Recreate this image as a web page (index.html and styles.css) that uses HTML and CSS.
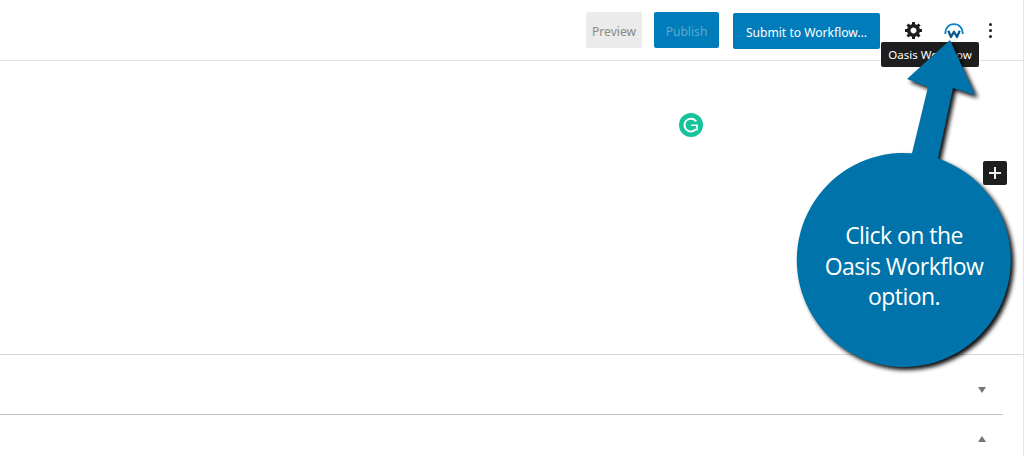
FILE: index.html
```html
<!DOCTYPE html>
<html lang="en">
<head>
<meta charset="utf-8">
<title>Oasis Workflow</title>
<link rel="stylesheet" href="styles.css">
</head>
<body>
<div class="page">
  <header class="topbar">
    <div class="btn btn-preview">Preview</div>
    <div class="btn btn-publish">Publish</div>
    <div class="btn btn-submit">Submit to Workflow...</div>
    <svg class="icon icon-gear" viewBox="0 0 20 20"><path d="M18 12h-2.180c-.17.7-.44 1.350-.81 1.930l1.540 1.540-2.100 2.100-1.540-1.540c-.58.36-1.230.63-1.910.79V19H8v-2.180c-.68-.16-1.330-.43-1.910-.79l-1.540 1.540-2.120-2.120 1.540-1.540c-.36-.58-.63-1.230-.79-1.910H1V9.030h2.170c.16-.7.44-1.350.8-1.940L2.430 5.550l2.100-2.100 1.540 1.540c.58-.37 1.240-.64 1.930-.81V2h3v2.180c.68.16 1.330.43 1.910.79l1.540-1.540 2.120 2.120-1.540 1.540c.36.59.64 1.240.8 1.940H18V12zm-8.500 1.500c1.660 0 3-1.340 3-3s-1.340-3-3-3-3 1.340-3 3 1.340 3 3 3z"/></svg>
    <svg class="icon icon-oasis" viewBox="0 0 20 16" fill="none"><path d="M1.400 11C.8 5 5 1.100 10 1.100s9.200 3.900 8.600 9.900" stroke="#0a84c8" stroke-width="1.900"/><path d="M4.300 7.800 7 14 10 8.800 13 14 15.700 7.800" stroke="#10598f" stroke-width="2.300" stroke-linejoin="round"/></svg>
    <div class="dots"><span></span><span></span><span></span></div>
  </header>
  <main class="editor">
    <div class="grammarly">
      <svg viewBox="0 0 24 24" fill="none" stroke="#fff"><path d="M17.200 8.500A6.400 6.400 0 1 0 16.800 16.200" stroke-width="1.900"/><path d="M12 12.300H18V17.500" stroke-width="1.600"/></svg>
    </div>
    <div class="plus"></div>
  </main>
  <section class="panel">
    <div class="panel-row"><span class="caret caret-down"></span></div>
    <div class="panel-row"><span class="caret caret-up"></span></div>
  </section>
</div>
<div class="tooltip">Oasis Workflow</div>
<div class="callout">
  <svg class="callout-shape" viewBox="790 36 240 350">
    <path d="M950 40 975 95 953 88 938 158.600A107 107 0 1 1 912 153.300L928 87 907 79Z"/>
  </svg>
  <p class="callout-text">Click on the<br>Oasis Workflow<br>option.</p>
</div>
</body>
</html>
```
FILE: styles.css
```css
* { box-sizing: border-box; }
html, body { margin: 0; height: 100%; overflow: hidden; background: #fff; }
body { font-family: "Noto Sans", "Open Sans", sans-serif; }
.page { width: 1024px; height: 456px; border-right: 1px solid #e2e4e7; display: flex; flex-direction: column; }
.topbar { height: 61px; flex: none; border-bottom: 1px solid #e2e4e7; display: flex; align-items: center; padding: 0 0 0 586px; }
.btn { height: 36px; padding-top: 2px; display: flex; align-items: center; justify-content: center; font-size: 12.100px; border-radius: 2px; flex: none; }
.btn-preview { width: 56px; background: #ebebeb; color: #8a8a85; }
.btn-publish { width: 65px; margin-left: 12px; background: #007cba; color: #5ea9d3; }
.btn-submit { width: 147px; margin-left: 14px; margin-top: 2px; background: #007cba; color: #fff; }
.icon { flex: none; display: block; }
.icon-gear { width: 20px; height: 20px; margin-left: 24px; fill: #1e1e1e; }
.icon-oasis { width: 20px; height: 16px; margin-left: 20px; margin-top: 1px; }
.dots { width: 4px; margin-left: 24px; display: flex; flex-direction: column; gap: 3px; align-items: center; }
.dots span { width: 3px; height: 3px; border-radius: 50%; background: #1e1e1e; }
.editor { position: relative; flex: none; height: 294px; border-bottom: 1px solid #d8d8d8; }
.grammarly { position: absolute; left: 679px; top: 52px; width: 24px; height: 24px; border-radius: 50%; background: #15c39a; }
.grammarly svg { display: block; width: 24px; height: 24px; }
.plus { position: absolute; left: 983px; top: 100px; width: 24px; height: 24px; border-radius: 2px; background: #1e1e1e; }
.plus::before, .plus::after { content: ""; position: absolute; background: #f0f0f0; }
.plus::before { left: 6px; top: 11px; width: 12px; height: 2px; }
.plus::after { left: 11px; top: 6px; width: 2px; height: 12px; }
.panel { flex: 1; width: 1003px; background: #fff; }
.panel-row { height: 60px; border-bottom: 1px solid #c4c4c4; position: relative; }
.panel-row:last-child { border-bottom: 0; }
.caret { position: absolute; left: 977.500px; width: 0; height: 0; border-left: 4.500px solid transparent; border-right: 4.500px solid transparent; }
.caret-down { top: 32px; border-top: 6px solid #72777c; }
.caret-up { top: 21px; border-bottom: 6px solid #72777c; }
.tooltip { position: absolute; left: 881px; top: 42px; width: 98px; height: 25px; border-radius: 2px; background: #1e1e1e; color: #fff; font-size: 11.500px; display: flex; align-items: center; justify-content: center; }
.callout { position: absolute; left: 790px; top: 36px; width: 240px; height: 350px; }
.callout-shape { display: block; width: 240px; height: 350px; fill: #0073aa; filter: drop-shadow(3px 3px 2px rgba(0,0,0,.95)); }
.callout-text { position: absolute; left: 14px; top: 184px; width: 200px; margin: 0; text-align: center; color: #fff; font-family: "Open Sans", sans-serif; font-size: 23px; line-height: 30.500px; letter-spacing: -.55px; }
```
